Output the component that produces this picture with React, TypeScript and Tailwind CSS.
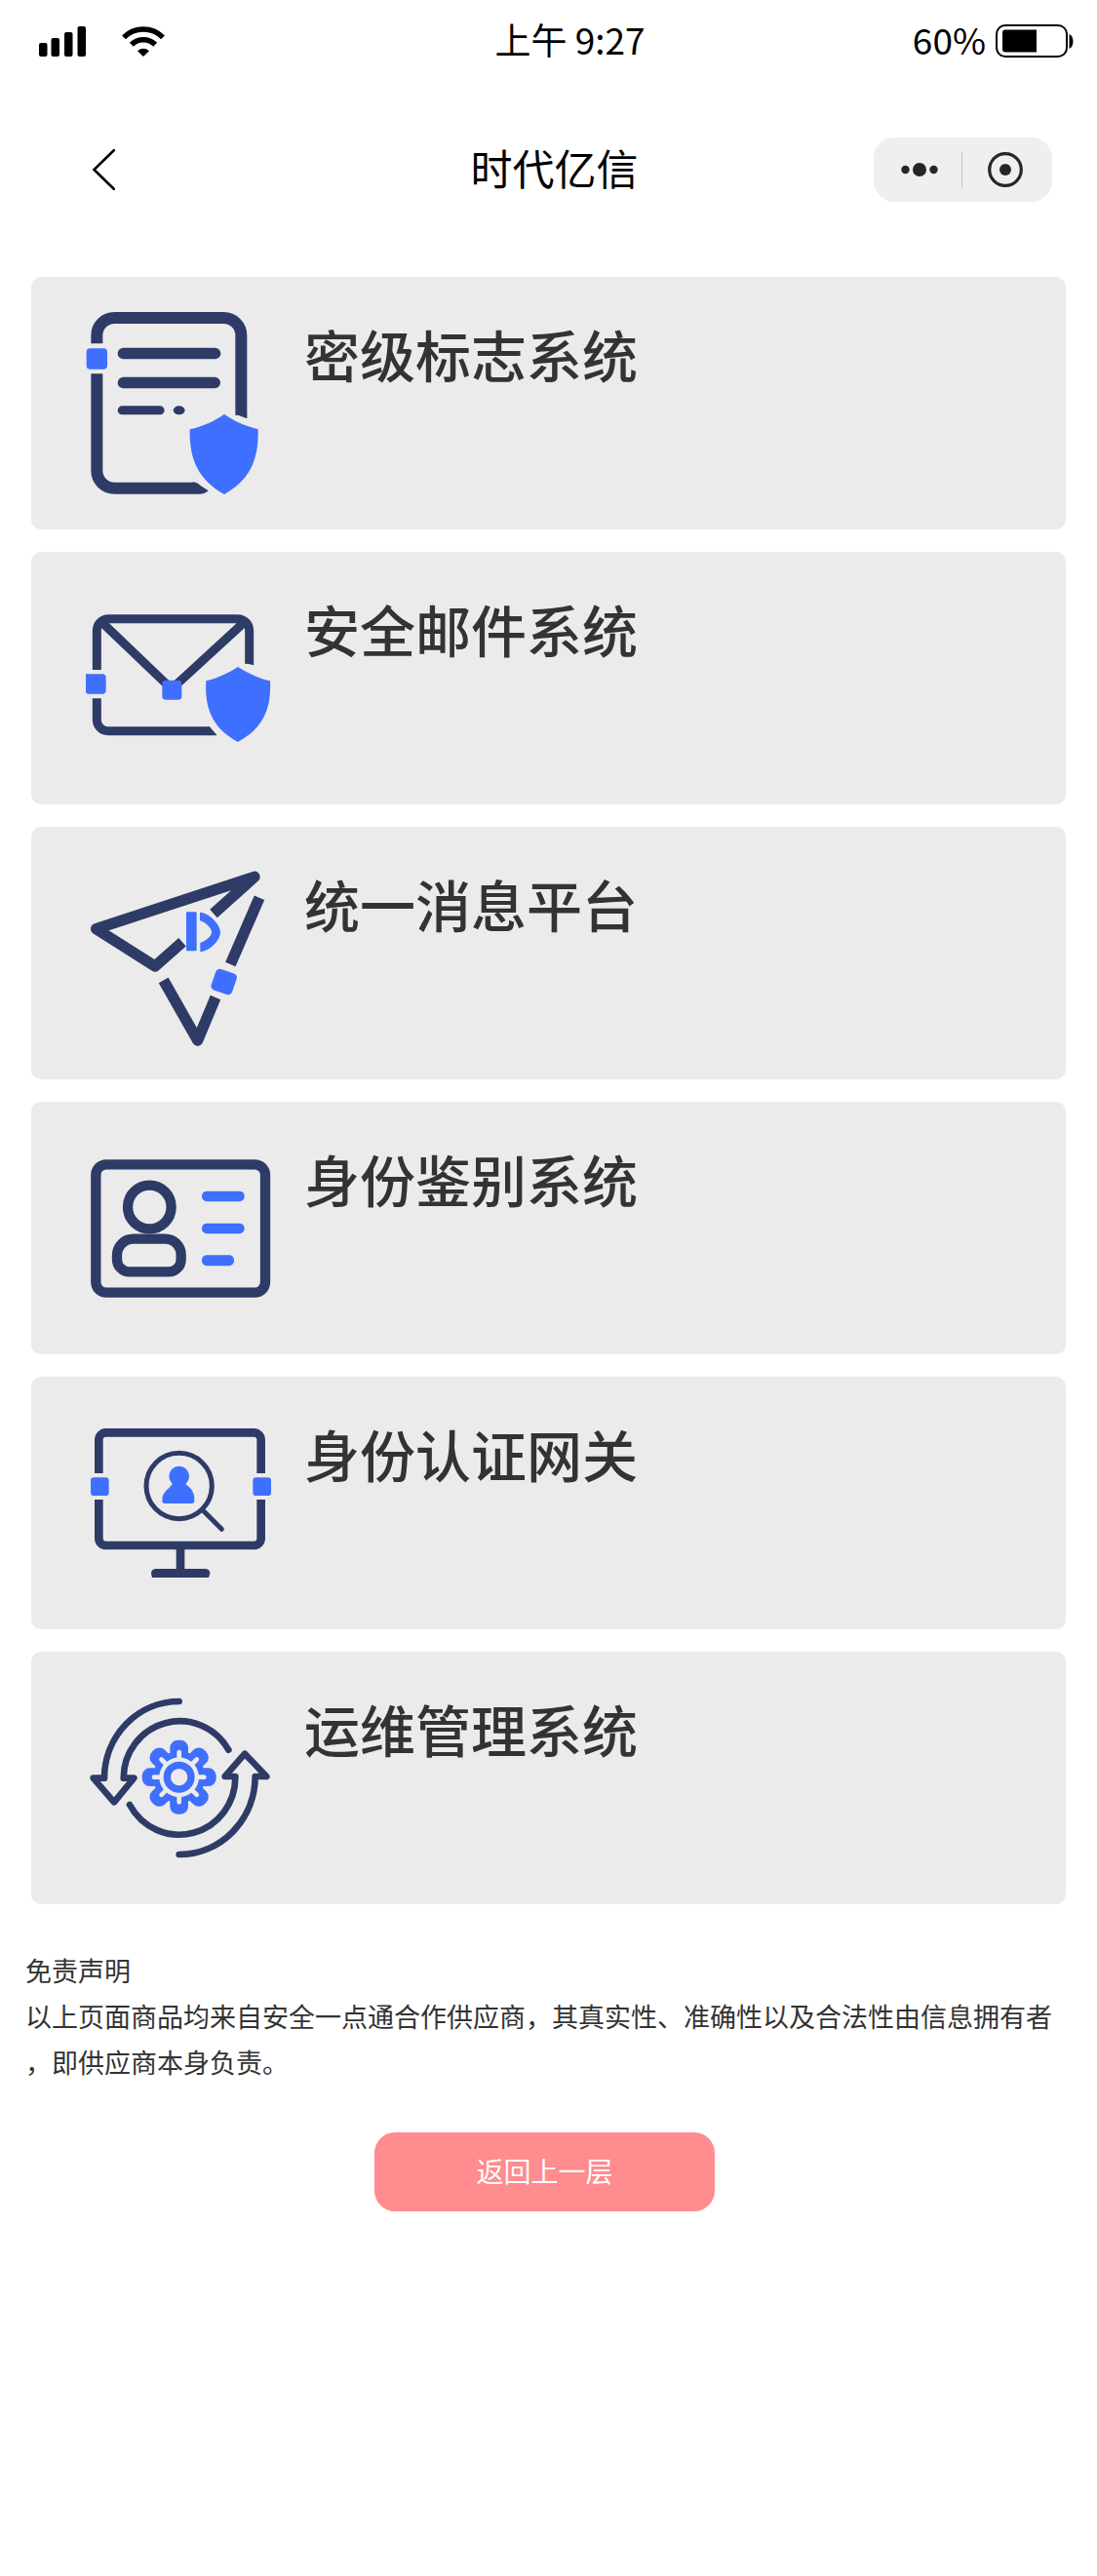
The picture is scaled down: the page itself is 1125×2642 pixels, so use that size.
import type { ReactNode } from "react";

const NAVY = "#2e3b66";
const BLUE = "#3f6fff";
const CARD = "#ebebeb";

function Icon({ top, children }: { top: number; children: ReactNode }) {
  return (
    <svg
      className="h-[199px] w-[200px] shrink-0"
      viewBox={`186 ${top} 600 597`}
      fill="none"
      aria-hidden="true"
    >
      {children}
    </svg>
  );
}

function DocumentIcon() {
  return (
    <Icon top={132}>
      <g stroke={NAVY} strokeWidth="36">
        <path d="M238 247V222a54 54 0 0 1 54-54H628a54 54 0 0 1 54 54V467" />
        <path d="M238 340V638a54 54 0 0 0 54 54H532" />
      </g>
      <g fill={NAVY}>
        <path d="M664 465H700V478L668 466Z" />
        <path d="M530 674C545 672 552 680 558 685L581 700C572 708 562 710 555 710H530Z" />
        <rect x="302" y="260" width="317" height="35" rx="17.5" />
        <rect x="302" y="350" width="316" height="35" rx="17.5" />
        <rect x="302" y="439" width="144" height="27" rx="13.5" />
        <ellipse cx="491" cy="452.500" rx="18" ry="13.500" />
      </g>
      <rect x="206" y="262" width="64" height="64" rx="11" fill={BLUE} />
      <path
        d="M630 464C660 486 698 502 734 511C736 600 712 665 630 711C548 665 522 600 524 511C562 502 600 486 630 464Z"
        fill={BLUE}
      />
    </Icon>
  );
}

function MailIcon() {
  return (
    <Icon top={108}>
      <g stroke={NAVY} strokeWidth="27">
        <path d="M238 381V260a36 36 0 0 1 36-36H671a36 36 0 0 1 36 36V362" />
        <path d="M238 469V535a34 34 0 0 0 34 34H582" />
        <path d="M255 236L468 440L690 236" />
      </g>
      <g fill={NAVY}>
        <path d="M693.500 360H720.500V367Z" />
        <path d="M580 555.500H585L608 582.500H580Z" />
      </g>
      <rect x="439" y="413" width="60" height="60" rx="10" fill={BLUE} />
      <path d="M204 394H255a11 11 0 0 1 11 11V444a11 11 0 0 1-11 11H212a8 8 0 0 1-8-6Z" fill={BLUE} />
      <path
        d="M672 372C700 390 738 408 771 415C776 510 742 565 672 603C602 565 568 510 574 415C607 408 644 390 672 372Z"
        fill={BLUE}
      />
    </Icon>
  );
}

function PlaneIcon() {
  return (
    <Icon top={114}>
      <g stroke={NAVY} strokeWidth="34" strokeLinejoin="round">
        <path d="M597 291L723 178L236 338L417 453L501 379" />
        <path d="M443 496L548 681L603 549" />
        <path d="M738 242L649 447" />
      </g>
      <g fill={BLUE}>
        <rect x="595" y="467" width="68" height="68" rx="13" transform="rotate(19 629 501)" />
        <rect x="513" y="286" width="32" height="120" rx="3" />
        <path d="M555 287C580 288 618 322 618 348C618 374 585 406 556 409V381C572 376 591 362 591 348C591 334 572 318 555 312Z" />
      </g>
    </Icon>
  );
}

function IdCardIcon() {
  return (
    <Icon top={117}>
      <g stroke={NAVY} strokeWidth="31">
        <rect x="235" y="220" width="521" height="394" rx="32" />
        <circle cx="400" cy="351" r="67" />
        <path d="M350 449H448a49 49 0 0 1 49 49V512a38 38 0 0 1-38 38H338a38 38 0 0 1-38-38V499a50 50 0 0 1 50-50Z" />
      </g>
      <g fill={BLUE}>
        <rect x="561" y="302" width="131" height="32" rx="15" />
        <rect x="561" y="401" width="131" height="32" rx="15" />
        <rect x="561" y="499" width="99" height="33" rx="15" />
      </g>
    </Icon>
  );
}

function MonitorIcon() {
  return (
    <Icon top={123}>
      <g stroke={NAVY} strokeWidth="26">
        <path d="M244 330V227a22 22 0 0 1 22-22H721a22 22 0 0 1 22 22V330" />
        <path d="M244 411V530a22 22 0 0 0 22 22H721a22 22 0 0 0 22-22V411" />
        <path d="M495 560V630" />
      </g>
      <path d="M418 624H573a14 14 0 0 1 13 15L582 651H408L405 639a14 14 0 0 1 13-15Z" fill={NAVY} />
      <g stroke={NAVY} strokeWidth="15" strokeLinecap="round">
        <circle cx="491" cy="369" r="101" />
        <path d="M564 444L622 502" />
      </g>
      <g fill={BLUE}>
        <rect x="219" y="343" width="56" height="56" rx="10" />
        <rect x="718" y="343" width="56" height="56" rx="10" />
        <circle cx="491" cy="339" r="31" />
        <path d="M474 352H507C507 372 538 370 538 410V415a8 8 0 0 1-8 8H447a8 8 0 0 1-8-8V410C441 380 472 375 474 352Z" />
      </g>
    </Icon>
  );
}

const TEETH = [0, 45, 90, 135, 180, 225, 270, 315];

function OpsIcon() {
  return (
    <Icon top={114}>
      <g stroke={NAVY} strokeWidth="20" strokeLinecap="round" strokeLinejoin="round">
        <path d="M491 177A230 236 0 0 0 261 413H227L291 487L352 413H320A173 176 0 0 1 643 326" />
        <path d="M339 495A173 176 0 0 0 664 408H632L693 338L760 408H725A234 240 0 0 1 491 648" />
      </g>
      <g fill={BLUE}>
        <circle cx="491" cy="410" r="80" />
        {TEETH.map((a) => (
          <rect key={a} x="463" y="296" width="56" height="60" rx="24" transform={`rotate(${a} 491 410)`} />
        ))}
      </g>
      <circle cx="491" cy="410" r="61" fill={CARD} />
      <g stroke={CARD} strokeWidth="14" strokeLinecap="round">
        {TEETH.map((a) => (
          <path key={a} d="M491 355V333" transform={`rotate(${a} 491 410)`} />
        ))}
      </g>
      <circle cx="491" cy="410" r="37" stroke={BLUE} strokeWidth="22" />
    </Icon>
  );
}

const SYSTEMS = [
  { name: "密级标志系统", icon: <DocumentIcon /> },
  { name: "安全邮件系统", icon: <MailIcon /> },
  { name: "统一消息平台", icon: <PlaneIcon /> },
  { name: "身份鉴别系统", icon: <IdCardIcon /> },
  { name: "身份认证网关", icon: <MonitorIcon /> },
  { name: "运维管理系统", icon: <OpsIcon /> },
];

function StatusBar() {
  return (
    <div className="grid h-[84px] grid-cols-[1fr_auto_1fr] items-center pr-6 pl-10 text-[37px] leading-none">
      <div className="flex items-center gap-[37px]">
        <svg className="h-[31px] w-12" viewBox="0 0 48 31" aria-label="信号">
          <rect x="0" y="17" width="8.500" height="14" rx="2" />
          <rect x="12.500" y="12" width="8.500" height="19" rx="2" />
          <rect x="26" y="6" width="8.500" height="25" rx="2" />
          <rect x="39.500" y="0" width="8.500" height="31" rx="2" />
        </svg>
        <svg className="h-[31px] w-11" viewBox="0 0 44 31" fill="none" aria-label="无线网络">
          <g stroke="#000" strokeWidth="5.500">
            <path d="M2 11.400A28.300 28.300 0 0 1 42 11.400" />
            <path d="M9.800 18.800A17.300 17.300 0 0 1 34.200 18.800" />
          </g>
          <path d="M22 31L16 25.200Q22 20.500 28 25.200Z" fill="#000" />
        </svg>
      </div>
      <span className="pb-1 pl-7">上午 9:27</span>
      <div className="flex items-center justify-end gap-2.5">
        <span className="pb-1">60%</span>
        <svg className="h-[34px] w-20" viewBox="0 0 80 34" fill="none" aria-label="电池">
          <rect x="1" y="1" width="72" height="32" rx="9" stroke="#000" strokeWidth="2" />
          <path d="M10 5.500H42V28.500H10a3 3 0 0 1-3-3V8.500a3 3 0 0 1 3-3Z" fill="#000" />
          <path d="M75.500 10C78 11 79.500 14 79.500 17.500S78 24 75.500 25Z" fill="#000" />
        </svg>
      </div>
    </div>
  );
}

function NavBar() {
  return (
    <header className="grid h-[180px] grid-cols-[1fr_auto_1fr] items-center pr-[46px] pl-[94px]">
      <button type="button" aria-label="返回" className="justify-self-start">
        <svg className="h-[42px] w-6" viewBox="0 0 24 42" fill="none">
          <path d="M23 1L2.500 21L23 41" stroke="#000" strokeWidth="2.600" strokeLinecap="round" />
        </svg>
      </button>
      <h1 className="pr-9 pb-1.5 text-[43px] leading-none font-normal">时代亿信</h1>
      <div className="flex h-[66px] w-[183px] items-center justify-self-end rounded-[21px] bg-[#f0eeef]">
        <button type="button" aria-label="更多" className="flex h-full w-[90px] items-center justify-center pl-1">
          <svg className="h-4 w-[38px]" viewBox="0 0 38 16" fill="#262626">
            <circle cx="4.500" cy="8" r="4.200" />
            <circle cx="19" cy="8" r="7" />
            <circle cx="33.500" cy="8" r="4.200" />
          </svg>
        </button>
        <span className="h-[38px] w-px bg-[#c4c4c4]" />
        <button type="button" aria-label="关闭" className="flex h-full flex-1 items-center justify-center pr-1">
          <svg className="size-9" viewBox="0 0 36 36" fill="none">
            <circle cx="18" cy="18" r="16.300" stroke="#262626" strokeWidth="3.200" />
            <circle cx="18" cy="18" r="6" fill="#262626" />
          </svg>
        </button>
      </div>
    </header>
  );
}

export default function App() {
  return (
    <div className="min-h-screen bg-white font-['Noto_Sans_CJK_SC',sans-serif] text-black">
      <StatusBar />
      <NavBar />
      <main className="pt-5">
        <nav className="flex flex-col gap-[23px] px-8" aria-label="系统列表">
          {SYSTEMS.map((s) => (
            <a key={s.name} href="#" className="flex gap-[30px] rounded-[10px] bg-[#ebebeb] py-[30px] pl-[50px]">
              {s.icon}
              <span className="pt-[19px] text-[57px] leading-[58px] font-medium text-[#333333]">{s.name}</span>
            </a>
          ))}
        </nav>
        <section className="mt-11 px-[26px] text-[27px] leading-[47px] text-[#333333]">
          <h2>免责声明</h2>
          <p>
            以上页面商品均来自安全一点通合作供应商，其真实性、准确性以及合法性由信息拥有者
            <br />
            ，即供应商本身负责。
          </p>
        </section>
        <div className="mt-[49px] flex justify-center pr-2 pb-12">
          <button
            type="button"
            className="h-[81px] w-[349px] rounded-[21px] bg-[#ff8c8e] pb-1 text-[28px] leading-none text-white"
          >
            返回上一层
          </button>
        </div>
      </main>
    </div>
  );
}
